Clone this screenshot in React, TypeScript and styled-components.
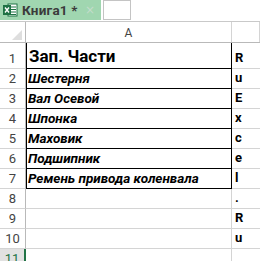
import { FC } from 'react';
import styled, { createGlobalStyle } from 'styled-components';

const GlobalStyle = createGlobalStyle`
  html, body {
    margin: 0;
    padding: 0;
    background: #fff;
  }
  body {
    width: 260px;
    height: 261px;
    overflow: hidden;
    font-family: Carlito, Calibri, Roboto, 'Noto Sans', sans-serif;
  }
`;

type RowData = {
  num: number;
  text?: string;
  letter?: string;
  kind?: 'title' | 'item';
};

const rows: RowData[] = [
  { num: 1, text: 'Зап. Части', letter: 'R', kind: 'title' },
  { num: 2, text: 'Шестерня', letter: 'u', kind: 'item' },
  { num: 3, text: 'Вал Осевой', letter: 'E', kind: 'item' },
  { num: 4, text: 'Шпонка', letter: 'x', kind: 'item' },
  { num: 5, text: 'Маховик', letter: 'c', kind: 'item' },
  { num: 6, text: 'Подшипник', letter: 'e', kind: 'item' },
  { num: 7, text: 'Ремень привода коленвала', letter: 'l', kind: 'item' },
  { num: 8, letter: '.' },
  { num: 9, letter: 'R' },
  { num: 10, letter: 'u' },
  { num: 11 },
];

const ExcelIcon: FC = () => (
  <svg width="15" height="14" viewBox="0 0 15 14">
    <rect x="5" y="1" width="9" height="12" fill="#fff" stroke="#1f7244" strokeWidth="1" />
    <path d="M8 4h5M8 6.5h5M8 9h5M8 11.5h5" stroke="#1f7244" strokeWidth="1" />
    <rect x="0" y="2" width="8" height="10" fill="#1f7244" />
    <path d="M2 4.5l4 5M6 4.5l-4 5" stroke="#fff" strokeWidth="1.4" />
  </svg>
);

const App: FC = () => {
  return (
    <>
      <GlobalStyle />
      <Page>
        <TabStrip>
          <Tab>
            <ExcelIcon />
            <TabTitle>Книга1 *</TabTitle>
            <TabClose>×</TabClose>
          </Tab>
          <NewTab />
        </TabStrip>
        <Sheet>
          <HeaderRow>
            <Corner>
              <CornerTriangle />
            </Corner>
            <ColHeader $width={206}>A</ColHeader>
            <ColHeader $width={28} />
          </HeaderRow>
          {rows.map((r) => (
            <Row key={r.num} $height={r.num === 1 ? 26 : 20}>
              <RowHeader $selected={r.num === 11}>{r.num}</RowHeader>
              <CellA $bordered={!!r.kind} $kind={r.kind}>
                {r.text}
              </CellA>
              <CellB>{r.letter}</CellB>
            </Row>
          ))}
        </Sheet>
      </Page>
    </>
  );
};

const Page = styled.div`
  width: 260px;
  height: 261px;
  overflow: hidden;
  background: #fff;
`;

const TabStrip = styled.div`
  height: 22px;
  box-sizing: border-box;
  display: flex;
  align-items: flex-start;
  border-bottom: 1px solid #c9c9c9;
  background: #fff;
`;

const Tab = styled.div`
  width: 101px;
  height: 20px;
  box-sizing: border-box;
  background: #a0d6b0;
  display: flex;
  align-items: center;
  padding-left: 3px;
  gap: 4px;
`;

const TabTitle = styled.span`
  font-family: Roboto, 'Noto Sans', sans-serif;
  font-weight: 700;
  font-size: 13.5px;
  color: #3b3b3b;
  letter-spacing: 0.2px;
`;

const TabClose = styled.span`
  margin-left: auto;
  margin-right: 6px;
  font-family: 'DejaVu Sans', sans-serif;
  font-size: 12px;
  color: #c3dccb;
`;

const NewTab = styled.div`
  width: 28px;
  height: 20px;
  box-sizing: border-box;
  margin-left: 2px;
  border: 1px solid #c4c4c4;
  background: #fff;
`;

const Sheet = styled.div`
  display: flex;
  flex-direction: column;
`;

const HeaderRow = styled.div`
  display: flex;
  height: 21px;
  box-sizing: border-box;
  border-bottom: 1px solid #b9b9b9;
`;

const Corner = styled.div`
  width: 26px;
  box-sizing: border-box;
  border-right: 1px solid #b9b9b9;
  position: relative;
`;

const CornerTriangle = styled.div`
  position: absolute;
  right: 3px;
  bottom: 2px;
  width: 0;
  height: 0;
  border-left: 10px solid transparent;
  border-bottom: 10px solid #dedede;
`;

const ColHeader = styled.div<{ $width: number }>`
  width: ${({ $width }) => $width}px;
  flex: none;
  box-sizing: border-box;
  border-right: 1px solid #d4d4d4;
  display: flex;
  align-items: center;
  justify-content: center;
  font-family: Roboto, 'Noto Sans', sans-serif;
  font-size: 12px;
  color: #444;
  padding-top: 1px;
`;

const Row = styled.div<{ $height: number }>`
  display: flex;
  height: ${({ $height }) => $height}px;
  flex: none;
`;

const RowHeader = styled.div<{ $selected: boolean }>`
  width: 26px;
  flex: none;
  box-sizing: border-box;
  border-right: ${({ $selected }) => ($selected ? '2px solid #217346' : '1px solid #b9b9b9')};
  border-bottom: 1px solid #d4d4d4;
  background: ${({ $selected }) => ($selected ? '#e1e1e1' : '#fff')};
  color: ${({ $selected }) => ($selected ? '#217346' : '#444')};
  display: flex;
  align-items: flex-end;
  justify-content: center;
  padding-bottom: 2px;
  font-family: Roboto, 'Noto Sans', sans-serif;
  font-size: 13px;
  line-height: 15px;
`;

const CellA = styled.div<{ $bordered: boolean; $kind?: 'title' | 'item' }>`
  width: 206px;
  flex: none;
  box-sizing: border-box;
  border-right: 1px solid ${({ $bordered }) => ($bordered ? '#000' : '#d4d4d4')};
  border-bottom: 1px solid ${({ $bordered }) => ($bordered ? '#000' : '#d4d4d4')};
  box-shadow: ${({ $bordered }) => ($bordered ? 'inset 1px 0 0 #000' : 'none')};
  display: flex;
  align-items: flex-end;
  padding: 0 0 2px ${({ $kind }) => ($kind === 'title' ? '3px' : '2px')};
  font-family: Roboto, 'Noto Sans', sans-serif;
  font-weight: 700;
  font-style: ${({ $kind }) => ($kind === 'item' ? 'italic' : 'normal')};
  font-size: ${({ $kind }) => ($kind === 'title' ? '17px' : '13.5px')};
  line-height: ${({ $kind }) => ($kind === 'title' ? '20px' : '16px')};
  color: #000;
  white-space: nowrap;
`;

const CellB = styled.div`
  width: 28px;
  flex: none;
  box-sizing: border-box;
  border-bottom: 1px solid #d4d4d4;
  display: flex;
  align-items: flex-end;
  padding: 0 0 2px 3px;
  font-family: Roboto, 'Noto Sans', sans-serif;
  font-weight: 700;
  font-size: 13px;
  line-height: 16px;
  color: #000;
`;

export default App;
